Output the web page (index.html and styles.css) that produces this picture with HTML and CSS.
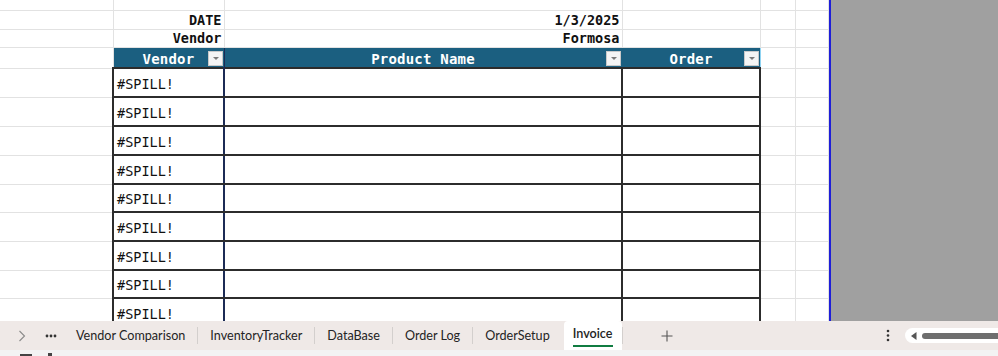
FILE: index.html
```html
<!DOCTYPE html>
<html lang="en">
<head>
    <meta charset="UTF-8">
    <title>Invoice</title>
    <link rel="stylesheet" href="styles.css">
</head>
<body>
    <div class="workbook">
        <div class="sheet-area">
            <table class="sheet">
                <colgroup>
                    <col class="col-a"><col class="col-b"><col class="col-c"><col class="col-d"><col class="col-e"><col class="col-f">
                </colgroup>
                <tr class="row-top">
                    <td></td><td></td><td></td><td></td><td></td><td></td>
                </tr>
                <tr class="row-info">
                    <td></td><td class="label">DATE</td><td class="label">1/3/2025</td><td></td><td></td><td></td>
                </tr>
                <tr class="row-info short">
                    <td></td><td class="label">Vendor</td><td class="label">Formosa</td><td></td><td></td><td></td>
                </tr>
                <tr class="row-head">
                    <td></td>
                    <th class="head head-vendor">Vendor<span class="filter"></span></th>
                    <th class="head head-product">Product Name<span class="filter"></span></th>
                    <th class="head head-order">Order<span class="filter"></span></th>
                    <td></td><td></td>
                </tr>
                <tr class="row-data"><td></td><td class="cell cell-vendor">#SPILL!</td><td class="cell"></td><td class="cell"></td><td></td><td></td></tr>
                <tr class="row-data"><td></td><td class="cell cell-vendor">#SPILL!</td><td class="cell"></td><td class="cell"></td><td></td><td></td></tr>
                <tr class="row-data"><td></td><td class="cell cell-vendor">#SPILL!</td><td class="cell"></td><td class="cell"></td><td></td><td></td></tr>
                <tr class="row-data"><td></td><td class="cell cell-vendor">#SPILL!</td><td class="cell"></td><td class="cell"></td><td></td><td></td></tr>
                <tr class="row-data short"><td></td><td class="cell cell-vendor">#SPILL!</td><td class="cell"></td><td class="cell"></td><td></td><td></td></tr>
                <tr class="row-data"><td></td><td class="cell cell-vendor">#SPILL!</td><td class="cell"></td><td class="cell"></td><td></td><td></td></tr>
                <tr class="row-data"><td></td><td class="cell cell-vendor">#SPILL!</td><td class="cell"></td><td class="cell"></td><td></td><td></td></tr>
                <tr class="row-data short"><td></td><td class="cell cell-vendor">#SPILL!</td><td class="cell"></td><td class="cell"></td><td></td><td></td></tr>
                <tr class="row-data"><td></td><td class="cell cell-vendor">#SPILL!</td><td class="cell"></td><td class="cell"></td><td></td><td></td></tr>
            </table>
            <div class="split-line"></div>
            <div class="outside"></div>
        </div>

        <div class="tabbar">
            <span class="nav-btn nav-next">
                <svg width="8" height="12" viewBox="0 0 8 12"><path d="M1.5 1 L6.5 6 L1.5 11" fill="none" stroke="#8a8a8a" stroke-width="1.1"/></svg>
            </span>
            <span class="nav-btn nav-more">
                <svg width="12" height="4" viewBox="0 0 12 4"><circle cx="2" cy="2" r="1.4" fill="#333"/><circle cx="6" cy="2" r="1.4" fill="#333"/><circle cx="10" cy="2" r="1.4" fill="#333"/></svg>
            </span>
            <span class="tab">Vendor Comparison</span>
            <span class="sep"></span>
            <span class="tab">InventoryTracker</span>
            <span class="sep"></span>
            <span class="tab">DataBase</span>
            <span class="sep"></span>
            <span class="tab">Order Log</span>
            <span class="sep"></span>
            <span class="tab">OrderSetup</span>
            <span class="tab tab-active"><span class="tab-label">Invoice</span></span>
            <span class="sep"></span>
            <span class="add-sheet">
                <svg width="12" height="12" viewBox="0 0 12 12"><path d="M6 0.5 V11.5 M0.5 6 H11.5" stroke="#555" stroke-width="1.1"/></svg>
            </span>
            <span class="more-menu">
                <svg width="4" height="13" viewBox="0 0 4 13"><circle cx="2" cy="2" r="1.3" fill="#333"/><circle cx="2" cy="6.5" r="1.3" fill="#333"/><circle cx="2" cy="11" r="1.3" fill="#333"/></svg>
            </span>
            <span class="hscroll">
                <svg width="6" height="8" viewBox="0 0 6 8"><path d="M5.5 0 V8 L0 4 Z" fill="#555"/></svg>
                <span class="thumb"></span>
            </span>
        </div>

        <div class="statusbar">
            <span class="status-icon"></span>
            <span class="status-icon small"></span>
        </div>
    </div>
</body>
</html>
```

FILE: styles.css
```css
:root {
    --grid-line: #e2e2e2;
    --table-line: #2c2c2c;
    --vendor-line: #1c2b55;
    --head-bg: #1b5f80;
    --tabbar-bg: #efe9e7;
}

* {
    margin: 0;
    padding: 0;
    box-sizing: border-box;
}

body {
    background: #ffffff;
    width: 998px;
    height: 356px;
    overflow: hidden;
}

.workbook {
    display: flex;
    flex-direction: column;
    height: 356px;
}

.sheet-area {
    display: flex;
    height: 321px;
    overflow: hidden;
    background: #ffffff;
}

/* grid */
.sheet {
    border-collapse: collapse;
    table-layout: fixed;
    width: 828px;
    flex: 0 0 828px;
    align-self: flex-start;
    font-family: "DejaVu Sans Mono", "Liberation Mono", monospace;
    color: #111;
}

.col-a { width: 113px; }
.col-b { width: 111px; }
.col-c { width: 398px; }
.col-d { width: 138px; }
.col-e { width: 35px; }
.col-f { width: 33px; }

.sheet td,
.sheet th {
    border: 1px solid var(--grid-line);
    padding: 0;
    white-space: nowrap;
    overflow: hidden;
}

.sheet tr > :first-child {
    border-left: none;
}

.row-top { height: 10px; }
.row-top td { border-top: none; }
.row-info { height: 19px; }
.row-info.short { height: 18px; }
.row-head { height: 21px; }
.row-data { height: 29px; }
.row-data.short { height: 28px; }

.label {
    text-align: right;
    font-weight: bold;
    font-size: 13.5px;
    padding-right: 2px !important;
    line-height: 16px;
}

.head {
    position: relative;
    background: var(--head-bg);
    color: #ffffff;
    font-weight: bold;
    font-size: 14px;
    line-height: 16px;
    letter-spacing: 0.2px;
    text-align: center;
    padding-top: 3px !important;
    border-color: var(--head-bg) !important;
}

.head-vendor {
    border-right: 1px solid var(--vendor-line) !important;
}

.head-order {
    border-right: 1px solid #8fd3f2 !important;
}

.filter {
    position: absolute;
    right: 1px;
    bottom: 1px;
    width: 15px;
    height: 15px;
    background: #f4f4f4;
    border: 1px solid #c9c9c9;
}

.filter::after {
    content: "";
    position: absolute;
    left: 4px;
    top: 5px;
    border-left: 3px solid transparent;
    border-right: 3px solid transparent;
    border-top: 3px solid #7a7a7a;
}

.cell {
    border: 2px solid var(--table-line) !important;
    font-size: 13.5px;
    line-height: 16px;
    padding-left: 3px !important;
    padding-top: 2px !important;
}

.cell-vendor {
    border-right: 2px solid var(--vendor-line) !important;
}

.split-line {
    flex: 0 0 2px;
    background: #1e1ed8;
}

.outside {
    flex: 1;
    background: #a0a0a0;
}

/* sheet tabs */
.tabbar {
    display: flex;
    align-items: center;
    height: 29px;
    background: var(--tabbar-bg);
    font-family: "Lato", "Noto Sans", sans-serif;
    font-size: 12.6px;
    color: #242424;
}

.nav-btn {
    display: flex;
    align-items: center;
    justify-content: center;
}

.nav-next {
    margin-left: 17px;
    width: 10px;
}

.nav-more {
    margin-left: 17px;
    width: 14px;
    margin-right: 6px;
}

.tab {
    padding: 0 12px;
    line-height: 29px;
}

.sep {
    width: 1px;
    height: 17px;
    background: #d3cfcd;
}

.tab-active {
    align-self: stretch;
    margin-left: 2px;
    padding: 0 9px;
    background: #ffffff;
    border-radius: 4px 4px 0 0;
    display: flex;
    align-items: flex-start;
}

.tab-label {
    font-weight: 600;
    line-height: 16px;
    margin-top: 5px;
    padding-bottom: 3px;
    border-bottom: 2px solid #107c41;
}

.add-sheet {
    display: flex;
    margin-left: 38px;
}

.more-menu {
    display: flex;
    margin-left: auto;
    margin-right: 15px;
}

.hscroll {
    display: flex;
    align-items: center;
    gap: 5px;
    width: 93px;
    height: 15px;
    padding-left: 6px;
    background: #ffffff;
    border-radius: 8px 0 0 8px;
}

.thumb {
    flex: 1;
    height: 6px;
    background: #6e6e6e;
    border-radius: 3px 0 0 3px;
}

.statusbar {
    display: flex;
    gap: 16px;
    height: 6px;
    padding-left: 20px;
    background: #f3f3f3;
}

.status-icon {
    width: 12px;
    height: 2px;
    margin-top: 4px;
    background: #444;
}

.status-icon.small {
    width: 4px;
    margin-top: 3px;
    height: 3px;
}
```
